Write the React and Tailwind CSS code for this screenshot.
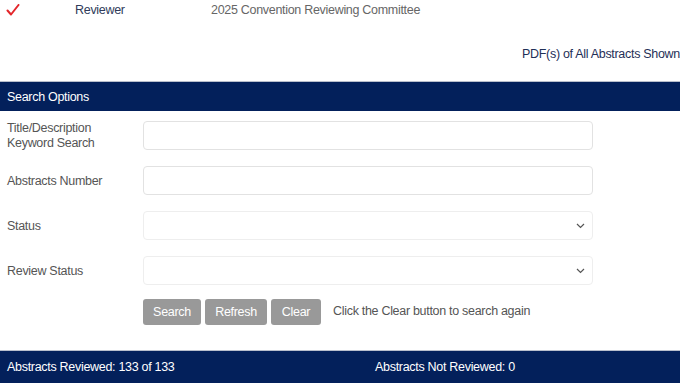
import React from 'react';

const Field = ({ label, children }) => (
  <div className="flex items-center h-[29px]">
    <label className="w-[143px] pl-[7px] pr-2 pt-[1px] leading-[15px] text-[#555]">{label}</label>
    {children}
  </div>
);

const Chevron = () => (
  <svg className="absolute right-[7px] top-[11px]" width="9" height="6" viewBox="0 0 9 6" fill="none">
    <path d="M1 1l3.5 3.5L8 1" stroke="#555" strokeWidth="1.2" />
  </svg>
);

const App = () => {
  return (
    <div className="w-[680px] h-[383px] overflow-hidden bg-white font-['Liberation_Sans',Arial,sans-serif] text-[12.5px] tracking-[-0.3px]">
      <div className="flex items-center h-[20px]">
        <span className="w-[75px] pl-[6px]">
          <svg width="14" height="12" viewBox="0 0 14 12" fill="none">
            <path d="M1.5 6.5L5 10.5L12.5 1" stroke="#e3262b" strokeWidth="2" strokeLinecap="round" strokeLinejoin="round" />
          </svg>
        </span>
        <span className="w-[136px] text-[#2f3b5a]">Reviewer</span>
        <span className="text-[#666]">2025 Convention Reviewing Committee</span>
      </div>

      <div className="flex justify-end pt-[25px] h-[61px]">
        <a href="#" className="text-[#1f2f57]">PDF(s) of All Abstracts Shown</a>
      </div>

      <div className="border-t border-[#b9bfcc] bg-[#03205b] h-[30px] flex items-center px-[7px] pt-[1px] text-white">
        Search Options
      </div>

      <div className="flex flex-col gap-[16px] pt-[10px]">
        <Field label={<>Title/Description<br />Keyword Search</>}>
          <input className="w-[450px] h-[29px] rounded-[4px] border border-[#e2e2e2] px-2" />
        </Field>
        <Field label="Abstracts Number">
          <input className="w-[450px] h-[29px] rounded-[4px] border border-[#e2e2e2] px-2" />
        </Field>
        <Field label="Status">
          <div className="relative w-[450px] h-[29px] rounded-[4px] border border-[#eeeeee]">
            <Chevron />
          </div>
        </Field>
        <Field label="Review Status">
          <div className="relative w-[450px] h-[29px] rounded-[4px] border border-[#eeeeee]">
            <Chevron />
          </div>
        </Field>
      </div>

      <div className="flex items-center gap-[4px] pl-[143px] pt-[14px]">
        <button className="h-[26px] w-[58px] rounded-[3px] bg-[#999] text-white">Search</button>
        <button className="h-[26px] w-[62px] rounded-[3px] bg-[#999] text-white">Refresh</button>
        <button className="h-[26px] w-[50px] rounded-[3px] bg-[#999] text-white">Clear</button>
        <span className="ml-[8px] text-[#555] -mt-[2px]">Click the Clear button to search again</span>
      </div>

      <div className="mt-[25px] border-t border-[#b9bfcc] bg-[#03205b] h-[33px] flex items-center pt-[1px] text-white">
        <span className="w-[375px] pl-[7px]">Abstracts Reviewed: 133 of 133</span>
        <span>Abstracts Not Reviewed: 0</span>
      </div>
    </div>
  );
};

export default App;
